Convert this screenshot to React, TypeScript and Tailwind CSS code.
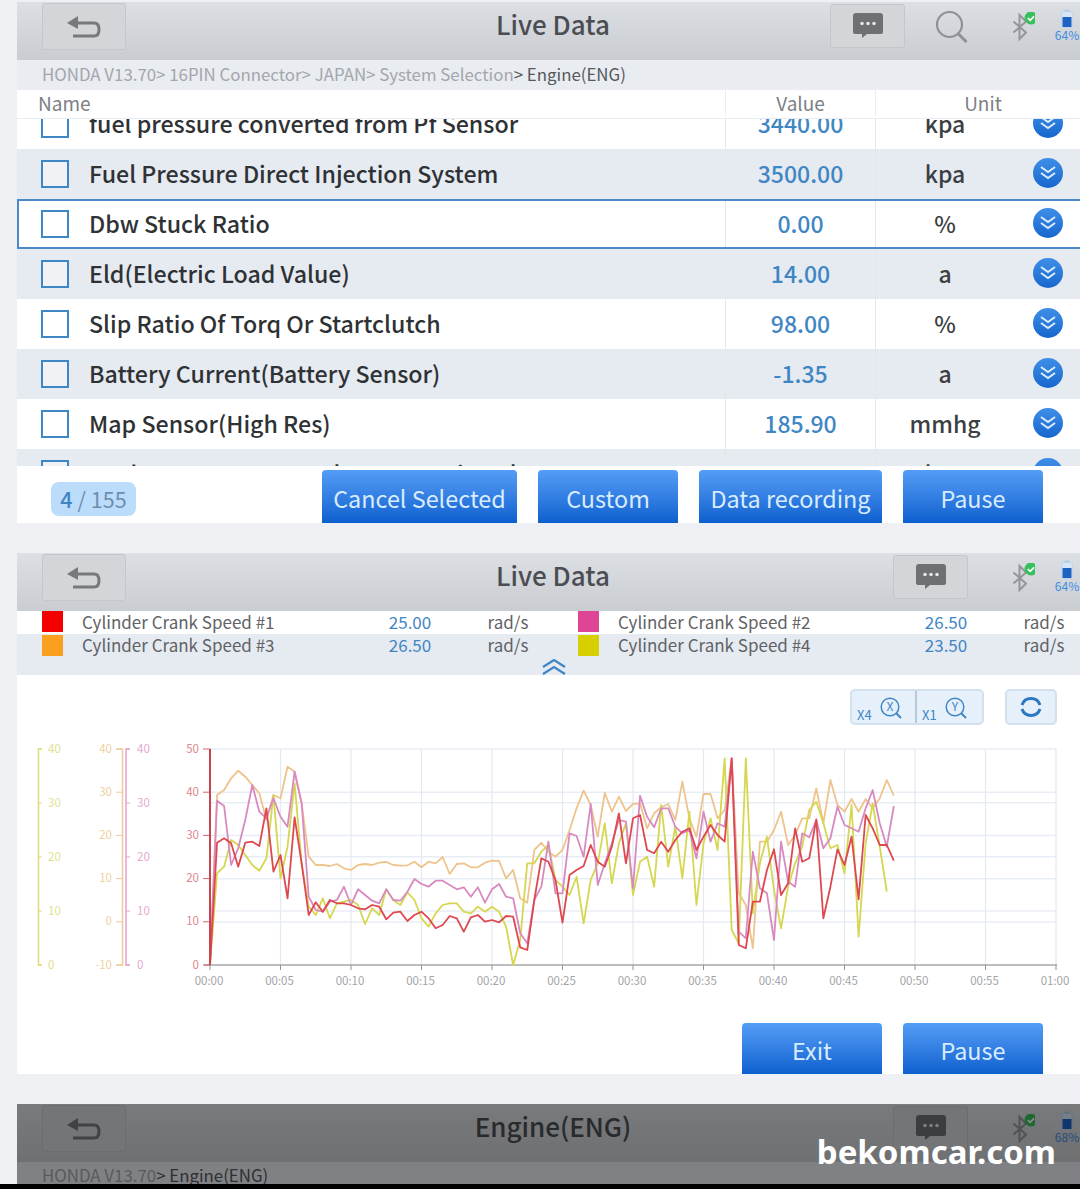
const font = { fontFamily: '"Noto Sans CJK SC", "Noto Sans", sans-serif' };

const rows = [
  { name: "fuel pressure converted from Pf Sensor", value: "3440.00", unit: "kpa" },
  { name: "Fuel Pressure Direct Injection System", value: "3500.00", unit: "kpa" },
  { name: "Dbw Stuck Ratio", value: "0.00", unit: "%", selected: true },
  { name: "Eld(Electric Load Value)", value: "14.00", unit: "a" },
  { name: "Slip Ratio Of Torq Or Startclutch", value: "98.00", unit: "%" },
  { name: "Battery Current(Battery Sensor)", value: "-1.35", unit: "a" },
  { name: "Map Sensor(High Res)", value: "185.90", unit: "mmhg" },
  { name: "Mode Pressure Control Sensor Gain Value", value: "0.00", unit: "kpa" },
];

// traces sampled every 0.5s, y values in chart pixels offset from 730 x3
const orange = [705,195,180,145,122,140,165,190,270,195,205,110,125,220,380,405,405,408,402,415,420,405,402,405,398,396,405,407,406,395,412,395,400,381,432,402,400,412,412,398,392,393,445,420,505,518,360,338,365,380,360,300,235,182,225,320,188,245,200,243,222,220,295,250,232,222,270,155,265,320,192,192,265,240,85,490,525,655,335,335,300,245,345,315,265,265,175,280,150,225,245,207,245,207,235,205,150,197];
const yellow = [705,430,410,330,345,375,405,422,385,195,445,350,160,400,530,555,505,565,520,515,510,525,582,535,555,478,510,525,487,510,565,590,550,525,520,520,545,550,530,545,530,545,590,705,630,400,400,365,345,450,470,495,440,580,450,400,280,460,340,280,495,395,380,470,225,410,290,445,245,525,340,265,360,85,600,640,85,550,400,320,480,595,470,400,350,240,215,280,355,345,430,225,620,340,220,350,485];
const pink = [705,212,228,405,355,270,165,245,265,205,260,290,125,220,500,540,545,515,510,470,525,478,495,512,520,478,510,512,485,447,462,470,452,452,465,478,472,500,472,518,478,462,500,505,610,640,510,470,335,490,490,310,318,380,222,465,400,340,270,275,475,197,260,292,235,235,290,310,300,385,245,335,280,290,85,605,625,365,475,490,630,335,455,470,310,322,270,355,325,230,285,295,305,235,180,280,350,228];
const red = [705,338,325,340,410,338,335,348,235,425,375,505,262,400,555,517,545,510,520,520,525,535,538,525,530,568,548,545,573,555,545,565,595,585,558,565,605,562,555,575,570,577,558,560,652,660,510,385,395,450,578,435,420,408,345,395,410,350,250,400,265,255,360,370,335,365,330,305,295,360,320,285,315,335,85,645,655,515,515,420,358,495,460,295,395,385,268,565,470,358,405,320,508,255,295,345,345,392];

const traces = [
  { data: orange, color: "#eec48c" },
  { data: yellow, color: "#d5d750" },
  { data: pink, color: "#d88ac0" },
  { data: red, color: "#de4850" },
];

function tracePoints(data: number[]) {
  return data.map((v, i) => `${210 + i * 7.05},${(730 + v / 3 - 735).toFixed(1)}`).join(" ");
}

function BackIcon() {
  return (
    <svg width="36" height="26" viewBox="0 0 36 26" fill="none" stroke="#77797c" strokeWidth="3">
      <path d="M6 9H28Q33 9 33 15.5Q33 22 28 22H7" />
      <path d="M1 9L12 2V15Z" fill="#77797c" stroke="none" />
    </svg>
  );
}

function ChatIcon() {
  return (
    <svg width="30" height="26" viewBox="0 0 30 26">
      <path d="M3 0H27Q30 0 30 3V19Q30 21 27 21H14L9 25V21H3Q0 21 0 19V3Q0 0 3 0Z" fill="#6e7072" />
      <circle cx="9" cy="10.5" r="1.8" fill="#e5e6e8" />
      <circle cx="15" cy="10.5" r="1.8" fill="#e5e6e8" />
      <circle cx="21" cy="10.5" r="1.8" fill="#e5e6e8" />
    </svg>
  );
}

function SearchIcon() {
  return (
    <svg width="34" height="34" viewBox="0 0 34 34" fill="none" stroke="#8f9194" strokeWidth="2.2">
      <circle cx="14.5" cy="14.5" r="12.5" />
      <path d="M23.5 24L31.5 32" strokeWidth="3" />
    </svg>
  );
}

function BluetoothIcon() {
  return (
    <svg width="30" height="30" viewBox="0 0 30 30" fill="none" stroke="#94969a" strokeWidth="2">
      <path d="M8.5 9.5L21 20.5L14.5 27V3L21 9.5L8.5 20.5" />
      <circle cx="26" cy="6" r="6.5" fill="#38c05c" stroke="none" />
      <path d="M22.8 6L25.2 8.4L29 4.4" stroke="#fff" strokeWidth="1.6" />
    </svg>
  );
}

function Status({ level }: { level: string }) {
  return (
    <div className="flex items-start">
      <div className="mt-[10px] w-[32px]">
        <BluetoothIcon />
      </div>
      <div className="ml-[17px] mt-[7px] flex w-[26px] flex-col items-center">
        <svg width="12" height="19" viewBox="0 0 12 19">
          <rect x="0.7" y="2.5" width="10.6" height="16" rx="2" fill="#d7e6f7" stroke="#c0d4ea" />
          <rect x="3.5" y="0.5" width="5" height="2" fill="#b5cbe4" />
          <rect x="1.5" y="8" width="9" height="10" fill="#1e63c4" />
        </svg>
        <span className="text-[12px] leading-[13px] text-[#3f8ee0] whitespace-nowrap">{level}</span>
      </div>
    </div>
  );
}

function Header({ title, search, level = "64%" }: { title: string; search?: boolean; level?: string }) {
  return (
    <div className="relative flex h-[58px] shrink-0 items-start bg-gradient-to-b from-[#dcdfe3] to-[#c9ccd0] pl-[25px]">
      <div className="mt-[1px] flex h-[47px] w-[84px] items-center justify-center rounded-[3px] border border-[#c4c6ca] bg-[#d3d5d9]">
        <BackIcon />
      </div>
      <div className="absolute left-[9px] right-0 top-0 flex h-[42px] items-center justify-center text-[26px] font-medium text-[#4a4d51]">
        {title}
      </div>
      <div className="ml-auto mt-[2px] flex h-[44px] w-[75px] items-center justify-center rounded-[3px] border border-[#c4c6ca] bg-[#d3d5d9]">
        <ChatIcon />
      </div>
      {search && (
        <div className="ml-[30px] mt-[8px]">
          <SearchIcon />
        </div>
      )}
      <div className={search ? "ml-[36px]" : "ml-[37px]"}>
        <Status level={level} />
      </div>
    </div>
  );
}

function Checkbox() {
  return <div className="w-[28px] h-[28px] shrink-0 border-2 border-[#3f86c4] bg-white/40" />;
}

function ExpandIcon() {
  return (
    <svg width="30" height="30" viewBox="0 0 30 30">
      <defs>
        <linearGradient id="expand" x1="0" y1="0" x2="0" y2="1">
          <stop offset="0" stopColor="#3f8fe8" />
          <stop offset="1" stopColor="#1766cc" />
        </linearGradient>
      </defs>
      <circle cx="15" cy="15" r="15" fill="url(#expand)" />
      <path d="M8 9L15 14L22 9M8 15L15 20L22 15" fill="none" stroke="#dcecff" strokeWidth="2" />
    </svg>
  );
}

function DataRow({ row, index }: { row: (typeof rows)[number]; index: number }) {
  return (
    <div className={`relative flex h-[50px] shrink-0 items-center ${index % 2 ? "bg-[#e6eaf1]" : "bg-white"}`}>
      <div className="flex h-full w-[709px] items-center pl-[24px] border-r border-[#e4e7ec]">
        <Checkbox />
        <span className="mb-[2px] ml-[20px] text-[23.2px] font-medium text-[#2f3235] whitespace-nowrap">{row.name}</span>
      </div>
      <div className="flex h-full w-[150px] items-center justify-center border-r border-[#e4e7ec] pb-[2px] text-[23px] font-medium text-[#3f86c4]">
        {row.value}
      </div>
      <div className="mb-[2px] w-[138px] text-center text-[23px] font-medium text-[#3c3f42]">{row.unit}</div>
      <div className="mb-[3px] flex w-[66px] justify-center pl-[2px]">
        <ExpandIcon />
      </div>
      {row.selected && <div className="absolute inset-0 border-y-2 border-l-2 border-[#4a8ac6]" />}
    </div>
  );
}

function BlueButton({ label, width, height = "h-[53px]" }: { label: string; width: string; height?: string }) {
  return (
    <div
      className={`flex items-center justify-center rounded-t-[4px] bg-gradient-to-b from-[#549df6] to-[#0a60cf] pt-[5px] text-[23.4px] text-[#d8ecff] ${width} ${height}`}
    >
      {label}
    </div>
  );
}

function LegendCell({ color, name, value, wide }: { color: string; name: string; value: string; wide?: boolean }) {
  return (
    <div className={`flex items-center pb-[2px] pl-[25px] ${wide ? "w-[536px]" : "w-[527px]"}`}>
      <div className={`w-[21px] h-[21px] shrink-0 ${color}`} />
      <div className="ml-[19px] w-[288px] text-[17px] text-[#5f6266]">{name}</div>
      <div className="w-[80px] text-center text-[17px] text-[#3f86c4]">{value}</div>
      <div className="ml-[23px] w-[70px] text-center text-[17px] text-[#5f6266]">rad/s</div>
    </div>
  );
}

function ZoomCell({ axis, times, divider }: { axis: string; times: string; divider?: boolean }) {
  return (
    <div className={`relative flex w-[65px] pl-[5px] ${divider ? "border-r-2 border-[#b9c8d8]" : ""}`}>
      <span className="mt-[14px] text-[13px] leading-[20px] text-[#3f86c4]">{times}</span>
      <svg className="ml-[8px] mt-[6px]" width="22" height="22" viewBox="0 0 22 22" fill="none" stroke="#3f86c4" strokeWidth="1.5">
        <circle cx="10" cy="10" r="8.8" />
        <path d="M16 16L21 21" strokeWidth="2" />
        <text x="10" y="14.2" fontSize="12" textAnchor="middle" fill="#3f86c4" stroke="none">
          {axis}
        </text>
      </svg>
    </div>
  );
}

function Chart() {
  const hLines = [749, 792.3, 802.7, 835.5, 856.7, 878.7, 911, 922];
  const vLines = Array.from({ length: 12 }, (_, i) => 280.5 + i * 70.5);
  const times = Array.from({ length: 13 }, (_, i) => `${i === 12 ? "01" : "00"}:${String(i === 12 ? 0 : i * 5).padStart(2, "0")}`);
  const y = (v: number) => v - 735;
  return (
    <svg width="1080" height="265" viewBox="0 0 1080 265" className="block -ml-[17px] max-w-none shrink-0" fontSize="11.5">
      {hLines.map((l) => (
        <line key={l} x1="210" x2="1056" y1={y(l)} y2={y(l)} stroke="#e8edf5" strokeWidth="1.5" />
      ))}
      {vLines.map((l) => (
        <line key={l} x1={l} x2={l} y1={y(749)} y2={y(965)} stroke="#e4e8f0" strokeWidth="1.2" />
      ))}

      {/* yellow axis */}
      <path d={`M42 ${y(749)}H38.5V${y(965)}H42`} fill="none" stroke="#dcdc7e" strokeWidth="1.5" />
      {[40, 30, 20, 10, 0].map((v, i) => (
        <g key={v}>
          <line x1="38.5" x2="42" y1={y(749 + i * 54)} y2={y(749 + i * 54)} stroke="#dcdc7e" />
          <text x="48" y={y(749 + i * 54) + 3.5} fill="#dfe08e">{v}</text>
        </g>
      ))}

      {/* orange axis */}
      <path d={`M116 ${y(749)}H122.5V${y(965)}H116`} fill="none" stroke="#f0cb98" strokeWidth="1.5" />
      {[40, 30, 20, 10, 0, -10].map((v, i) => (
        <g key={v}>
          <line x1="116" x2="122.5" y1={y(749 + i * 43.2)} y2={y(749 + i * 43.2)} stroke="#f0cb98" />
          <text x="112" y={y(749 + i * 43.2) + 3.5} fill="#f0cf9f" textAnchor="end">{v}</text>
        </g>
      ))}

      {/* pink axis */}
      <path d={`M130 ${y(749)}H126V${y(965)}H130`} fill="none" stroke="#e3a3cf" strokeWidth="1.5" />
      {[40, 30, 20, 10, 0].map((v, i) => (
        <g key={v}>
          <line x1="126" x2="130" y1={y(749 + i * 54)} y2={y(749 + i * 54)} stroke="#e3a3cf" />
          <text x="137" y={y(749 + i * 54) + 3.5} fill="#e5a9d2">{v}</text>
        </g>
      ))}

      {/* time axis */}
      <line x1="204" x2="1057" y1={y(965)} y2={y(965)} stroke="#a5a7aa" strokeWidth="1.5" />
      {times.map((t, i) => (
        <g key={t}>
          <line x1={210 + i * 70.5} x2={210 + i * 70.5} y1={y(965)} y2={y(970)} stroke="#8f9194" />
          <text x={209 + i * 70.5} y={y(985)} fill="#a2a4a7" textAnchor="middle">{t}</text>
        </g>
      ))}

      {/* main axis */}
      {[50, 40, 30, 20, 10, 0].map((v, i) => (
        <g key={v}>
          <line x1="203" x2="210" y1={y(749 + i * 43.2)} y2={y(749 + i * 43.2)} stroke="#d9606a" />
          <text x="199" y={y(749 + i * 43.2) + 3.5} fill="#e0858c" textAnchor="end">{v}</text>
        </g>
      ))}

      {traces.map((t) => (
        <polyline key={t.color} points={tracePoints(t.data)} fill="none" stroke={t.color} strokeWidth="1.8" strokeLinejoin="round" />
      ))}
      <line x1="210" x2="210" y1={y(749)} y2={y(965)} stroke="#c8434c" strokeWidth="2" />
    </svg>
  );
}

export default function App() {
  return (
    <div className="relative h-[1189px] w-[1080px] overflow-hidden bg-[#eef0f4]" style={font}>
      <div className="flex flex-col pl-[17px] pt-[2px]">
        {/* data list */}
        <section className="flex h-[521px] flex-col bg-white overflow-hidden">
          <Header title="Live Data" search />
          <div className="flex h-[30px] shrink-0 items-center bg-[#e9ecf1] pb-[2px] pl-[25px] text-[16.85px] text-[#a3a6ab]">
            <span>HONDA V13.70&gt; 16PIN Connector&gt; JAPAN&gt; System Selection</span>
            <span className="text-[#55585c]">&gt; Engine(ENG)</span>
          </div>
          <div className="flex h-[29px] shrink-0 items-center border-b border-[#e9ecf0] pb-[2px] text-[19px] text-[#7c7f84]">
            <div className="flex h-full w-[709px] items-center pl-[21px] border-r border-[#eceef2]">Name</div>
            <div className="flex h-full w-[150px] items-center justify-center border-r border-[#eceef2]">Value</div>
            <div className="flex-1 pl-[10px] text-center">Unit</div>
          </div>
          <div className="h-[347px] shrink-0 overflow-hidden">
            <div className="-mt-[20px] flex flex-col">
              {rows.map((row, i) => (
                <DataRow key={row.name} row={row} index={i} />
              ))}
            </div>
          </div>
          <div className="flex flex-1 items-end pl-[34px]">
            <div className="mb-[7px] flex h-[34px] w-[85px] items-center justify-center rounded-[8px] bg-[#bcdcfb] text-[21.5px] text-[#6d8eb0]">
              <span className="text-[#3f86c4] font-medium">4</span>
              <span className="ml-[5px]">/ 155</span>
            </div>
            <div className="ml-[186px] flex gap-[21px]">
              <BlueButton label="Cancel Selected" width="w-[195px]" />
              <BlueButton label="Custom" width="w-[140px]" />
              <BlueButton label="Data recording" width="w-[183px]" />
              <BlueButton label="Pause" width="w-[140px]" />
            </div>
          </div>
        </section>

        {/* graph view */}
        <section className="mt-[30px] flex h-[521px] flex-col overflow-hidden bg-white">
          <Header title="Live Data" />
          <div className="flex h-[23px] shrink-0 items-center">
            <LegendCell wide color="bg-[#f50000]" name="Cylinder Crank Speed #1" value="25.00" />
            <LegendCell color="bg-[#df4595]" name="Cylinder Crank Speed #2" value="26.50" />
          </div>
          <div className="h-[41px] shrink-0 bg-[#e6eaf1]">
            <div className="flex h-[24px] items-center">
              <LegendCell wide color="bg-[#fb9f1f]" name="Cylinder Crank Speed #3" value="26.50" />
              <LegendCell color="bg-[#d8cf00]" name="Cylinder Crank Speed #4" value="23.50" />
            </div>
            <div className="flex justify-center pl-[10px] pt-[1px]">
              <svg width="24" height="16" viewBox="0 0 24 16" fill="none" stroke="#3f86c4" strokeWidth="2.2">
                <path d="M1 8L12 1L23 8M1 15L12 8L23 15" />
              </svg>
            </div>
          </div>
          <div className="flex h-[60px] shrink-0 justify-end pt-[14px] pr-[23px]">
            <div className="flex h-[36px] rounded-[5px] border-2 border-[#d3e1ef] bg-[#e6f0fa]">
              <ZoomCell axis="X" times="X4" divider />
              <ZoomCell axis="Y" times="X1" />
            </div>
            <div className="ml-[21px] flex h-[36px] w-[52px] items-center justify-center rounded-[5px] border-2 border-[#d3e1ef] bg-[#e6f0fa]">
              <svg width="24" height="24" viewBox="0 0 24 24" fill="none" stroke="#2a78c0" strokeWidth="3">
                <path d="M3 10A9.5 9.5 0 0 1 21 10" />
                <path d="M3 14A9.5 9.5 0 0 0 21 14" />
              </svg>
            </div>
          </div>
          <Chart />
          <div className="flex flex-1 items-end justify-end gap-[21px] pr-[37px]">
            <BlueButton label="Exit" width="w-[140px]" height="h-[51px]" />
            <BlueButton label="Pause" width="w-[140px]" height="h-[51px]" />
          </div>
        </section>

        {/* dimmed page underneath */}
        <section className="relative mt-[30px] h-[80px] overflow-hidden bg-[#e9ecf1]">
          <Header title="Engine(ENG)" level="68%" />
          <div className="pl-[25px] pt-[2px] text-[16.85px] leading-[22px] text-[#a3a6ab]">
            HONDA V13.70<span className="text-[#55585c]">&gt; Engine(ENG)</span>
          </div>
          <div className="absolute inset-0 bg-black/45" />
        </section>
      </div>
      <div className="absolute right-[24px] top-[1130px] text-[33px] font-bold leading-[44px] text-white" style={{ fontFamily: '"Noto Sans", sans-serif' }}>
        bekomcar.com
      </div>
      <div className="absolute bottom-0 left-0 h-[5px] w-full bg-black" />
    </div>
  );
}
